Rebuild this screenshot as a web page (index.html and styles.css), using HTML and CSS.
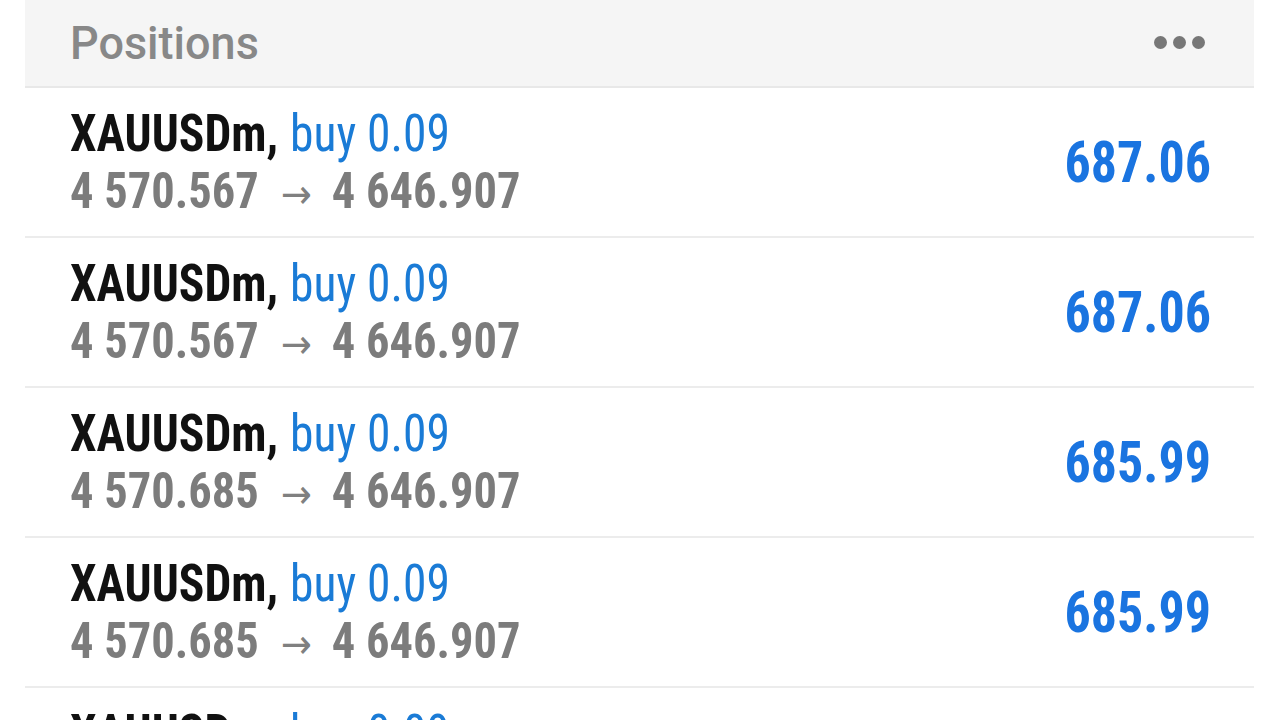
FILE: index.html
```html
<!DOCTYPE html>
<html>
<head>
<meta charset="utf-8">
<link rel="stylesheet" href="styles.css">
</head>
<body>
<div class="panel">
  <div class="header">
    <span class="title">Positions</span>
    <span class="dots"><i></i><i></i><i></i></span>
  </div>
  <div class="row">
    <div class="info">
      <div class="line1"><span class="sym">XAUUSDm,</span> <span class="side">buy 0.09</span></div>
      <div class="line2">4 570.567<span class="arrow">→</span>4 646.907</div>
    </div>
    <div class="profit">687.06</div>
  </div>
  <div class="row">
    <div class="info">
      <div class="line1"><span class="sym">XAUUSDm,</span> <span class="side">buy 0.09</span></div>
      <div class="line2">4 570.567<span class="arrow">→</span>4 646.907</div>
    </div>
    <div class="profit">687.06</div>
  </div>
  <div class="row">
    <div class="info">
      <div class="line1"><span class="sym">XAUUSDm,</span> <span class="side">buy 0.09</span></div>
      <div class="line2">4 570.685<span class="arrow">→</span>4 646.907</div>
    </div>
    <div class="profit">685.99</div>
  </div>
  <div class="row">
    <div class="info">
      <div class="line1"><span class="sym">XAUUSDm,</span> <span class="side">buy 0.09</span></div>
      <div class="line2">4 570.685<span class="arrow">→</span>4 646.907</div>
    </div>
    <div class="profit">685.99</div>
  </div>
  <div class="row">
    <div class="info">
      <div class="line1"><span class="sym">XAUUSDm,</span> <span class="side">buy 0.09</span></div>
      <div class="line2">4 570.685<span class="arrow">→</span>4 646.907</div>
    </div>
    <div class="profit">685.99</div>
  </div>
</div>
</body>
</html>
```

FILE: styles.css
```css
html, body {
  margin: 0;
  padding: 0;
  background: #ffffff;
}
body {
  width: 1280px;
  height: 720px;
  overflow: hidden;
}
.panel {
  margin-left: 25px;
  width: 1229px;
}
.header {
  height: 86px;
  background: #f5f5f5;
  border-bottom: 2px solid #e8e8e8;
  display: flex;
  align-items: center;
  justify-content: space-between;
  padding: 0 49px 0 45px;
}
.title {
  font-family: Roboto, "Liberation Sans", sans-serif;
  font-weight: 500;
  font-size: 45px;
  color: #888888;
  margin-top: 1px;
  transform: scaleY(1.03);
}
.dots {
  display: flex;
  gap: 6px;
  margin-top: -2px;
}
.dots i {
  display: block;
  width: 13px;
  height: 13px;
  border-radius: 50%;
  background: #777777;
}
.row {
  height: 148px;
  border-bottom: 2px solid #ececec;
  display: flex;
  align-items: center;
  justify-content: space-between;
  padding: 0 43px 0 45px;
  font-family: "Roboto Condensed", "Liberation Sans Narrow", "Arial Narrow", Roboto, sans-serif;
}
.info {
  display: flex;
  flex-direction: column;
  margin-top: 4px;
  transform: scaleY(1.09);
  white-space: nowrap;
}
.line1 {
  font-size: 47.5px;
  line-height: 52px;
}
.sym {
  font-weight: 700;
  color: #111111;
}
.side {
  color: #1a7bd6;
  margin-left: 1px;
}
.line2 {
  font-size: 46.5px;
  line-height: 52px;
  font-weight: 700;
  color: #7c7c7c;
}
.arrow {
  display: inline-block;
  font-family: "DejaVu Sans", sans-serif;
  font-size: 37px;
  font-weight: 400;
  margin: 0 20px 0 22px;
  color: #808080;
}
.profit {
  font-size: 52px;
  font-weight: 700;
  color: #1a74e0;
  margin-top: 1px;
  transform: scaleY(1.1);
}
```
